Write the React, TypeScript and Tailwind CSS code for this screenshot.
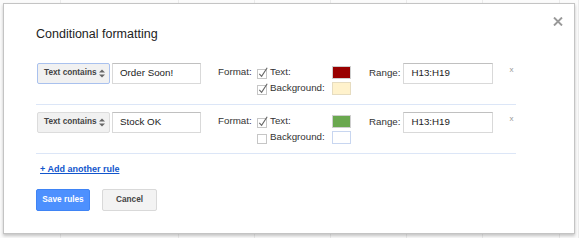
import React from 'react';

const FONT = "font-['Liberation_Sans',Arial,sans-serif]";

// faint spreadsheet behind the dialog
const SHEET_COLS = [61, 118, 76, 76, 76, 76, 77, 19];

function Check({ on }: { on: boolean }) {
  return (
    <svg width="12" height="13" viewBox="0 0 12 13" className="shrink-0">
      <rect x="0.5" y="3.5" width="9" height="9" fill="#fff" stroke="#c6c6c6" />
      {on && <path d="M2.3 7.8 L4.6 10.3 L10.2 1.8" fill="none" stroke="#666" strokeWidth="1.1" />}
    </svg>
  );
}

function SelectBox({ focused }: { focused?: boolean }) {
  return (
    <div
      className={`ml-[1px] w-[73px] h-[21px] flex items-center pl-[6px] pr-[4px] rounded-[2px] border bg-[#f1f1f1] ${
        focused ? 'border-[#a9c1ee]' : 'border-[#dcdcdc]'
      }`}
    >
      <span className="text-[8.25px] font-bold text-[#444] whitespace-nowrap">Text contains</span>
      <svg width="6" height="9" viewBox="0 0 6 9" className="ml-auto">
        <path d="M0 3.5 L3 0.5 L6 3.5 Z" fill="#666" />
        <path d="M0 5.5 L3 8.5 L6 5.5 Z" fill="#666" />
      </svg>
    </div>
  );
}

function TextBox({ value, width }: { value: string; width: string }) {
  return (
    <div
      className={`${width} h-[21px] flex items-center pl-[7px] border border-[#d9d9d9] border-t-[#c0c0c0] bg-white text-[9.75px] text-[#222]`}
    >
      {value}
    </div>
  );
}

interface Rule {
  value: string;
  textColor: string;
  bgOn: boolean;
  bgColor: string;
  bgBorder: string;
  focused?: boolean;
}

const RULES: Rule[] = [
  { value: 'Order Soon!', textColor: '#990000', bgOn: true, bgColor: '#fff2cc', bgBorder: '#e6dcc0', focused: true },
  { value: 'Stock OK', textColor: '#6aa84f', bgOn: false, bgColor: '#ffffff', bgBorder: '#c8d6f0' },
];

function RuleRow({ rule, first }: { rule: Rule; first?: boolean }) {
  return (
    <div
      className={`flex items-start w-[480px] border-b border-[#dce6f7] pb-[9px] ${first ? '' : 'pt-[7px]'}`}
    >
      <SelectBox focused={rule.focused} />
      <div className="ml-[2px]">
        <TextBox value={rule.value} width="w-[89px]" />
      </div>

      {/* Format block */}
      <div className="ml-[17px] mt-[3px] flex flex-col gap-[3px] text-[9.75px] text-[#333]">
        <div className="flex items-center h-[13px]">
          <span className="w-[39px]">Format:</span>
          <Check on />
          <span className="ml-[1px] w-[62px]">Text:</span>
          <span className="w-[19px] h-[13px] border border-[#cfcfcf]" style={{ background: rule.textColor }} />
        </div>
        <div className="flex items-center h-[13px]">
          <span className="w-[39px]" />
          <Check on={rule.bgOn} />
          <span className="ml-[1px] w-[62px]">Background:</span>
          <span
            className="w-[19px] h-[13px] border"
            style={{ background: rule.bgColor, borderColor: rule.bgBorder }}
          />
        </div>
      </div>

      <span className="ml-[18px] mt-[3px] text-[9.75px] text-[#333] leading-[13px]">Range:</span>
      <div className="ml-[3px]">
        <TextBox value="H13:H19" width="w-[90px]" />
      </div>
      <span className="ml-[16px] mt-[2px] text-[8px] leading-[10px] text-[#999]">x</span>
    </div>
  );
}

export default function App() {
  return (
    <div className={`relative w-[579px] h-[238px] overflow-hidden bg-[#fbfbfb] ${FONT}`}>
      {/* spreadsheet grid */}
      <div className="flex h-full">
        {SHEET_COLS.map((w, i) => (
          <div key={i} className="h-full border-r border-[#ebebeb]" style={{ width: w }} />
        ))}
      </div>

      {/* dialog */}
      <div className="absolute left-[3px] top-[3px] w-[572px] h-[231px] bg-white border border-[#c4c4c4] shadow-[0_2px_3px_rgba(0,0,0,0.22)] pl-[32px] pt-[23px]">
        <svg width="10" height="9" viewBox="0 0 10 9" className="absolute left-[549px] top-[13px]">
          <path d="M1 0.5 L9 8.5 M9 0.5 L1 8.5" stroke="#999" strokeWidth="1.9" />
        </svg>

        <h1 className="text-[12.5px] leading-[14px] text-[#222] font-normal">Conditional formatting</h1>

        <div className="mt-[22px]">
          <RuleRow rule={RULES[0]} first />
          <RuleRow rule={RULES[1]} />
        </div>

        <div className="mt-[10px] pl-[4px] h-[11px] flex items-center">
          <span className="text-[9px] font-bold text-[#1155cc] underline">+ Add another rule</span>
        </div>

        <div className="mt-[14px] flex gap-[12px]">
          <button className="w-[54px] h-[22px] rounded-[2px] bg-[#4d90fe] border border-[#3f84f5] text-white text-[8.25px] font-bold">
            Save rules
          </button>
          <button className="w-[55px] h-[22px] rounded-[2px] bg-[#f3f3f3] border border-[#d9d9d9] text-[#444] text-[8.25px] font-bold">
            Cancel
          </button>
        </div>
      </div>
    </div>
  );
}
